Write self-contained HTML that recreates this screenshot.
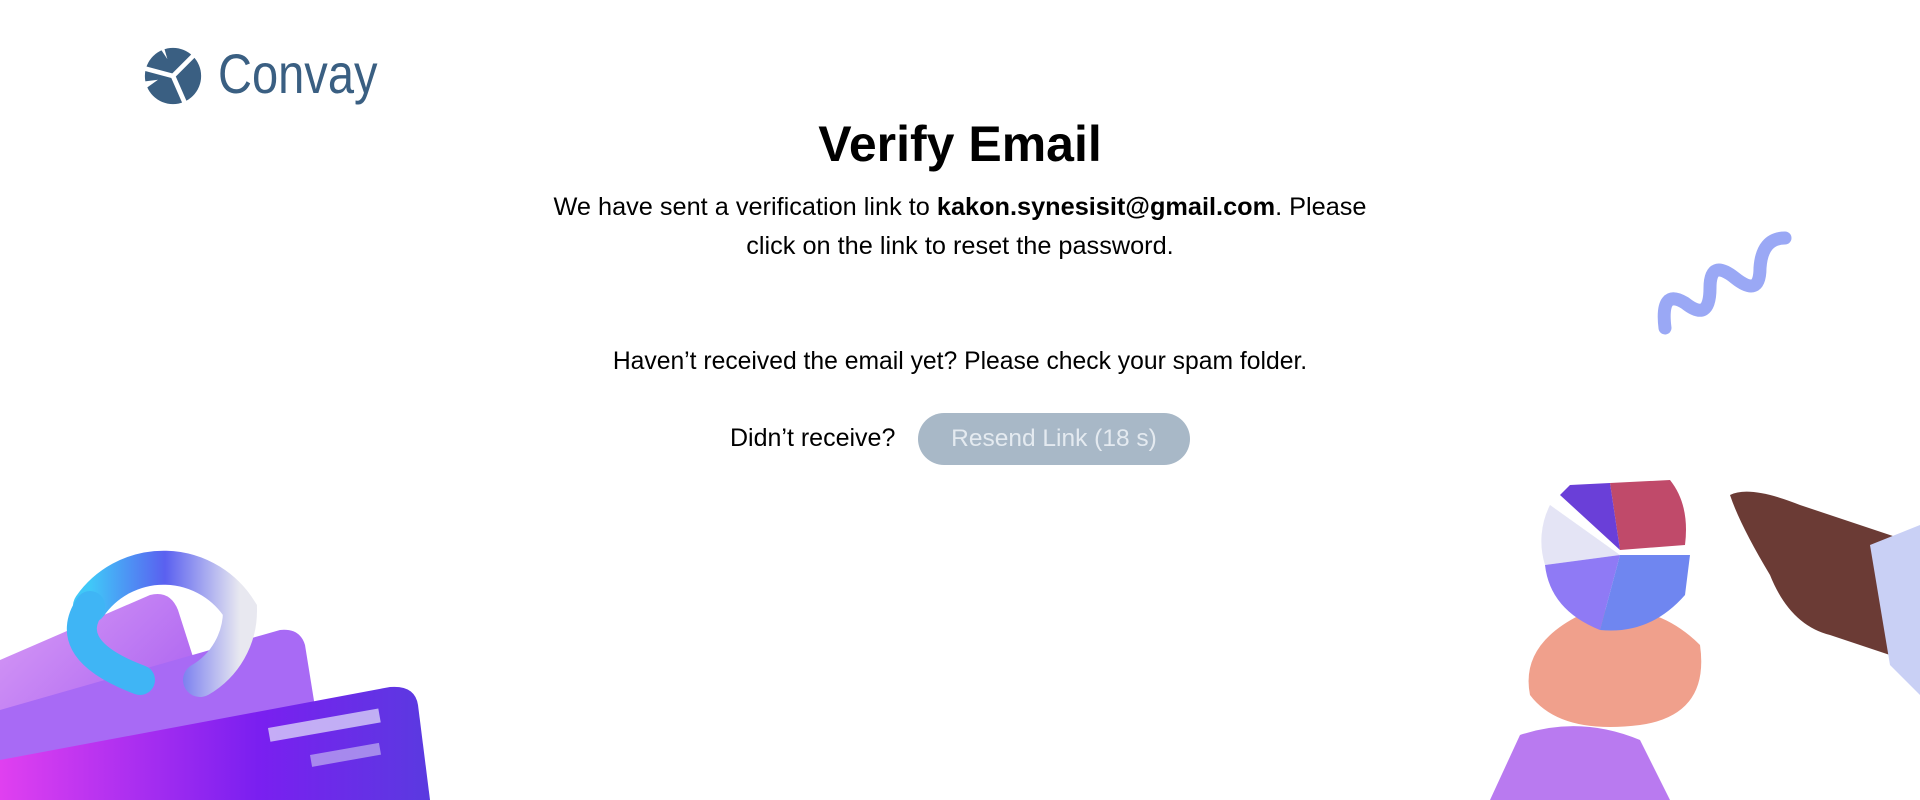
<!DOCTYPE html>
<html><head><meta charset="utf-8"><style>
body{margin:0;width:1920px;height:800px;background:#fff;position:relative;overflow:hidden;font-family:"Liberation Sans",sans-serif;color:#000}
.abs{position:absolute}
h1{position:absolute;left:0;width:1920px;top:111px;margin:0;text-align:center;font-size:50px;font-weight:bold;line-height:66px}
.p{position:absolute;left:0;width:1920px;text-align:center;font-size:25.3px;line-height:39px}
</style></head><body>
<svg class="abs" style="left:143px;top:46px" width="60" height="60" viewBox="0 0 64 64">
<circle cx="32" cy="32" r="30" fill="#3a5f82"/>
<g stroke="#fff" stroke-width="5" fill="none"><path d="M2 24 L32 32 L56 8 M32 32 L46 64"/></g>
<path d="M0 38 L16 36 L2 46Z M22 0 L26 14 L18 2Z" fill="#fff"/>
</svg>
<div class="abs" style="left:218px;top:42px;font-size:56px;color:#3a5f82;line-height:64px;transform:scaleX(.84);transform-origin:0 0">Convay</div>
<h1>Verify Email</h1>
<div class="p" style="top:188px">We have sent a verification link to <b>kakon.synesisit@gmail.com</b>. Please<br>click on the link to reset the password.</div>
<div class="p" style="top:342px;font-size:24.7px">Haven’t received the email yet? Please check your spam folder.</div>
<div class="abs" style="left:730px;top:424px;font-size:25px">Didn’t receive?</div>
<div class="abs" style="left:918px;top:413px;width:272px;height:52px;border-radius:26px;background:#a8b8c7;color:#e4eaf0;font-size:24.5px;line-height:52px;text-align:center">Resend Link (18 s)</div>
<svg class="abs" style="left:0;top:510px" width="440" height="290" viewBox="0 0 440 290">
<defs>
<linearGradient id="g1" x1="0" y1="0" x2="1" y2="1"><stop offset="0" stop-color="#d89cf5"/><stop offset="1" stop-color="#9b4df0"/></linearGradient>
<linearGradient id="g2" x1="0" y1="0" x2="1" y2="0"><stop offset="0" stop-color="#e040f0"/><stop offset=".6" stop-color="#7a1ff0"/><stop offset="1" stop-color="#5a3ae0"/></linearGradient>
<linearGradient id="g3" x1="0" y1="0" x2="1" y2="0"><stop offset="0" stop-color="#40c8f8"/><stop offset=".5" stop-color="#5a60f0"/><stop offset="1" stop-color="#e8e8f0"/></linearGradient>
</defs>
<path d="M0 150 L150 85 Q170 80 178 100 L210 200 L0 290 Z" fill="url(#g1)"/>
<path d="M0 200 L280 120 Q300 118 305 135 L330 290 L0 290 Z" fill="#a86af5"/>
<path d="M0 250 L390 177 Q415 175 418 195 L430 290 L0 290 Z" fill="url(#g2)"/>
<rect x="268" y="218" width="112" height="14" fill="#d8d0f8" opacity=".8" transform="rotate(-10 268 218)"/>
<rect x="310" y="245" width="70" height="12" fill="#c0b0f0" opacity=".7" transform="rotate(-10 310 245)"/>
<path d="M90 96 A90 90 0 0 1 240 100 A80 80 0 0 1 200 170" stroke="url(#g3)" stroke-width="34" fill="none" stroke-linecap="round"/>
<path d="M90 96 Q60 140 140 170" stroke="#3fb5f5" stroke-width="30" fill="none" stroke-linecap="round"/>
</svg>
<svg class="abs" style="left:1650px;top:228px" width="145" height="115" viewBox="0 0 145 115">
<path d="M15 100 Q10 60 35 75 Q60 95 60 60 Q60 30 85 50 Q110 70 110 40 Q112 10 135 10" stroke="#9aa8f5" stroke-width="13" fill="none" stroke-linecap="round"/>
</svg>
<svg class="abs" style="left:1450px;top:465px" width="470" height="335" viewBox="0 0 470 335">
<path d="M280 30 Q300 20 350 40 L470 80 L470 200 L380 170 Q340 160 320 110 Q290 60 280 30 Z" fill="#6b3b35"/>
<path d="M420 80 L470 60 L470 230 L440 200 Z" fill="#c9d0f5"/>
<path d="M130 150 Q200 130 250 180 Q260 250 190 260 Q110 270 80 230 Q70 180 130 150 Z" fill="#f0a08c"/>
<path d="M40 335 L70 270 Q130 250 190 275 L220 335 Z" fill="#b97af0"/>
<path d="M100 40 A80 80 0 0 0 95 100 L170 90 Z" fill="#e4e4f5"/>
<path d="M95 100 Q100 145 150 165 L170 90 Z" fill="#8f7af5"/>
<path d="M150 165 Q200 170 235 130 L240 90 L170 90 Z" fill="#6f86f0"/>
<path d="M160 18 L220 15 Q240 40 235 80 L170 85 Z" fill="#c04a6a"/>
<path d="M120 20 L160 18 L170 85 L110 30 Z" fill="#6a3fd8"/>
</svg>
</body></html>
